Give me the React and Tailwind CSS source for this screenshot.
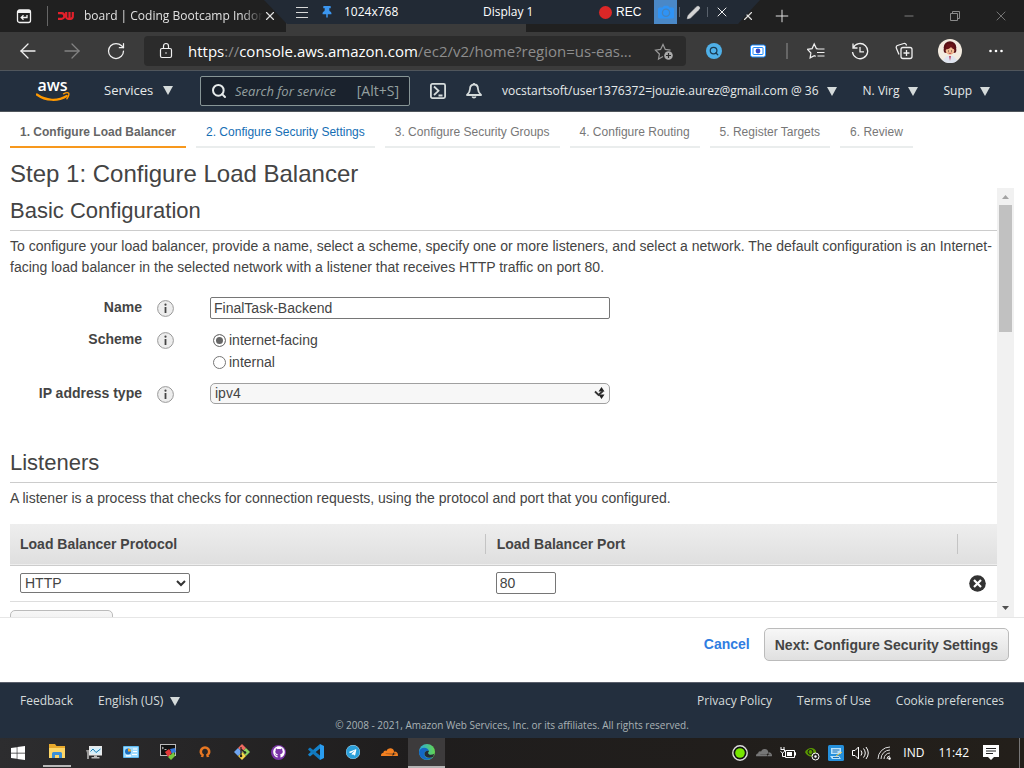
import { Search, X, Plus, Minus, Pencil, RotateCw, ArrowLeft, ArrowRight } from "lucide-react";
import { FaWindows, FaGithub, FaTelegram, FaCloudflare, FaThumbtack } from "react-icons/fa";

const SYSTEM = "font-['Open_Sans','Noto_Sans',sans-serif]";
const WIZARD_STEPS = [
  { label: "1. Configure Load Balancer", style: "border-[#f7981d] font-bold text-[#666]" },
  { label: "2. Configure Security Settings", style: "border-[#eaeded] text-[#146eb4]" },
  { label: "3. Configure Security Groups", style: "border-[#eaeded] text-[#777]" },
  { label: "4. Configure Routing", style: "border-[#eaeded] text-[#777]" },
  { label: "5. Register Targets", style: "border-[#eaeded] text-[#777]" },
  { label: "6. Review", style: "border-[#eaeded] text-[#777]" },
];

function Caret() {
  return (
    <svg viewBox="0 0 10 9" className="h-[9px] w-[10px] shrink-0 fill-[#d5dbdb]" aria-hidden="true">
      <path d="M0 0h10L5 9z" />
    </svg>
  );
}

function IconButton({ label, className = "w-11", children }) {
  return (
    <button type="button" aria-label={label} className={`flex h-full shrink-0 items-center justify-center ${className}`}>
      {children}
    </button>
  );
}

function TabStrip() {
  return (
    <div className="relative flex h-8 shrink-0 items-stretch bg-[#202020] text-[#e0e0e0]">
      <IconButton label="Tab actions" className="w-[47px]">
        <svg viewBox="0 0 16 16" className="size-4" fill="none" stroke="#f2f2f2" strokeWidth="1.3">
          <rect x="1.5" y="2" width="13" height="12.5" rx="2" />
          <path d="M2 3.5h12" strokeWidth="3" />
          <path d="M11 7v2.5H5.5M7.5 7.2 5.2 9.5l2.3 2.3" />
        </svg>
      </IconButton>
      <div className="my-1.5 w-px bg-[#666]" />
      <div className="flex w-[238px] items-center">
        <svg viewBox="0 0 16 8" className="ml-2.5 h-2 w-4 shrink-0" fill="none" stroke="#e3202b" strokeWidth="2.2">
          <path d="M0 1.2h3.5a2.8 2.8 0 0 1 0 5.6H0M8.2 0v4.5a2 2 0 0 0 2 2.3h2.3a2.3 2.3 0 0 0 2.3-2.3V0M11.5 0v6" />
        </svg>
        <span className="ml-2.5 w-[179px] shrink-0 text-xs leading-5 whitespace-nowrap [mask-image:linear-gradient(to_right,black_88%,transparent)]">
          board | Coding Bootcamp Indon
        </span>
        <button type="button" aria-label="Close tab">
          <X className="size-3.5" strokeWidth={2} />
        </button>
      </div>
      <div className="w-60 bg-[#3b3b3b]" />
      <div className="flex w-[230px] items-center justify-end">
        <button type="button" aria-label="Close tab" className="p-px">
          <X className="size-3.5" strokeWidth={2} />
        </button>
      </div>
      <IconButton label="New tab" className="w-[52px]">
        <Plus className="size-5" strokeWidth={1.2} />
      </IconButton>
      <div className="flex-1" />
      <div className="flex shrink-0 text-[#8a8a8a]">
        <IconButton label="Minimise" className="w-[46px]">
          <Minus className="size-3.5" strokeWidth={1.5} />
        </IconButton>
        <IconButton label="Restore" className="w-[46px]">
          <svg viewBox="0 0 12 12" className="size-3" fill="none" stroke="currentColor">
            <path d="M1.5 3.5h7v7h-7zM3.5 3.5v-2h7v7h-2" />
          </svg>
        </IconButton>
        <IconButton label="Close" className="w-[46px]">
          <X className="size-4" strokeWidth={1.2} />
        </IconButton>
      </div>
      <Recorder />
    </div>
  );
}

function Recorder() {
  return (
    <div className="absolute top-0 left-[264px] flex h-6 w-[496px] items-center bg-[#222a35] pl-8 text-xs text-white [clip-path:polygon(0_0,100%_0,474px_100%,23px_100%)]">
      <svg viewBox="0 0 12 12" className="size-3" stroke="#d8d8d8" aria-hidden="true">
        <path d="M0 1.5h12M0 6.5h12M0 11.5h12" />
      </svg>
      <FaThumbtack className="ml-3.5 h-3 w-2.5 text-[#3b96f0]" />
      <span className="ml-3 w-[139px]">1024x768</span>
      <span className="w-[116px]">Display 1</span>
      <span className="mr-1 size-[13px] rounded-full bg-[#dc2727]" />
      <span className="font-['Liberation_Sans',Arial,sans-serif]">REC</span>
      <div className="ml-auto flex h-full items-center pr-[30px]">
        <button type="button" aria-label="Take screenshot" className="flex h-full w-[23px] items-center justify-center bg-[#4a88c7]">
          <svg viewBox="0 0 16 14" className="h-3.5 w-4">
            <path d="M1.500 2.500h3L6 .800h4l1.500 1.700h3a1.500 1.500 0 0 1 1.500 1.500v8a1.500 1.500 0 0 1-1.500 1.500h-13A1.500 1.500 0 0 1 0 12V4a1.500 1.500 0 0 1 1.500-1.500z" fill="#2f93f5" />
            <circle cx="8" cy="7.700" r="3.600" fill="#2f93f5" stroke="#4683bd" strokeWidth="1.300" />
          </svg>
        </button>
        <span className="ml-0.5 h-2.5 w-px bg-[#59616c]" />
        <button type="button" aria-label="Draw" className="px-1.5">
          <Pencil className="size-[15px] fill-[#d5d5d5] text-[#d5d5d5]" strokeWidth={1} />
        </button>
        <span className="h-2.5 w-px bg-[#59616c]" />
        <button type="button" aria-label="Close recorder" className="pl-1.5">
          <X className="size-4" strokeWidth={1.4} />
        </button>
      </div>
    </div>
  );
}

function AddressBar() {
  return (
    <div className="flex h-[38px] shrink-0 items-center bg-[#3b3b3b] px-1.5 text-[#f0f0f0]">
      <IconButton label="Back"><ArrowLeft className="size-6" strokeWidth={1.3} /></IconButton>
      <IconButton label="Forward"><ArrowRight className="size-6 text-[#828282]" strokeWidth={1.3} /></IconButton>
      <IconButton label="Refresh"><RotateCw className="size-5" strokeWidth={1.5} /></IconButton>
      <div className="ml-1.5 flex h-[30px] min-w-0 flex-1 items-center rounded bg-[#2b2b2b] px-3">
        <svg viewBox="0 0 20 20" className="size-5 shrink-0" fill="none" stroke="#f0f0f0" strokeWidth="1.200">
          <rect x="4.500" y="7.500" width="11" height="9" rx="1.500" />
          <path d="M7.500 7.500V5a2.500 2.500 0 0 1 5 0v2.500" />
          <circle cx="10" cy="12" r=".8" fill="#f0f0f0" stroke="none" />
        </svg>
        <span className="ml-3 min-w-0 flex-1 overflow-hidden text-[15px] whitespace-nowrap text-[#8d8d8d]">
          <span className="text-white">https</span>://<span className="text-white">console.aws.amazon.com</span>/ec2/v2/home?region=us-eas...
        </span>
        <button type="button" aria-label="Add to favourites">
          <svg viewBox="0 0 20 20" className="size-5" fill="none" stroke="#999" strokeWidth="1.2">
            <path d="m9 15.500-4.500 2.500.9-5L1.500 9.200l5.100-.8L9 3.500l2.300 4.900 5.200.8" />
            <circle cx="14.500" cy="14.500" r="4.300" fill="#aaa" stroke="none" />
            <path d="M14.500 12v5M12 14.500h5" stroke="#2b2b2b" />
          </svg>
        </button>
      </div>
      <div className="ml-1.5 flex h-full shrink-0 items-center">
        <IconButton label="Page search">
          <span className="flex size-4 items-center justify-center rounded-full bg-[#4fb0e8]">
            <Search className="size-2.5 text-[#1b3b52]" strokeWidth={3} />
          </span>
        </IconButton>
        <IconButton label="Screen capture">
          <svg viewBox="0 0 16 14" className="h-3.5 w-4">
            <rect x=".5" y="1" width="15" height="12" rx="2" fill="#fff" stroke="#1d8bff" />
            <rect x="3" y="3.500" width="10" height="7" rx=".5" fill="#fff" stroke="#1d8bff" />
            <circle cx="8" cy="7" r="2.400" fill="#3949c6" />
          </svg>
        </IconButton>
        <span className="mx-1.5 h-4 w-0.5 bg-[#666]" />
        <IconButton label="Favourites">
          <svg viewBox="0 0 18 18" className="size-[18px]" fill="none" stroke="#f0f0f0" strokeWidth="1.2">
            <path d="m11 6.8-1.6-.2L7.2 2 5.1 6.6l-4.6.7L3.9 11l-.8 4.8 4.1-2.2 1.5.8M11 7h6.5M10 10.5h7.5M10.5 14h7" />
          </svg>
        </IconButton>
        <IconButton label="History">
          <svg viewBox="0 0 18 18" className="size-[18px]" fill="none" stroke="#f0f0f0" strokeWidth="1.3">
            <path d="M2 1.5V6h4.5M2.2 5.8A7.6 7.6 0 1 1 1.5 10M9 5v4.8h4" />
          </svg>
        </IconButton>
        <IconButton label="Collections">
          <svg viewBox="0 0 18 18" className="size-[18px]" fill="none" stroke="#f0f0f0" strokeWidth="1.3">
            <rect x="6" y="5.5" width="11" height="11" rx="2" />
            <path d="M4 12.5 1.4 6.2a2 2 0 0 1 1-2.7l6.4-2a2 2 0 0 1 2.4 1l.4 1M11.5 8v6M8.5 11h6" />
          </svg>
        </IconButton>
        <IconButton label="Profile" className="w-12">
          <svg viewBox="0 0 24 24" className="size-6">
            <circle cx="12" cy="12" r="12" fill="#f3ebe0" />
            <circle cx="12" cy="8.500" r="6.300" fill="#5a1015" />
            <rect x="5.700" y="8" width="12.600" height="6" rx="2.500" fill="#5a1015" />
            <ellipse cx="12" cy="11.500" rx="4.300" ry="4.300" fill="#f2bd93" />
            <path d="M7 10.500c3 0 5.500-1.500 6-2.500 1 1.500 2.500 2.500 4 2.500L15 5H9z" fill="#6b1419" />
            <path d="M10 12h.8M13.200 12h.8" stroke="#33201c" />
            <path d="M10.500 14q1.500 1 3 0" stroke="#b0303a" strokeWidth=".8" fill="none" />
            <path d="M4.500 21.500 9 17h6l4.500 4.500A12 12 0 0 1 4.500 21.500z" fill="#dfe4ef" />
            <path d="m11 17 1 5 1-5z" fill="#c04a6a" />
          </svg>
        </IconButton>
        <IconButton label="More">
          <svg viewBox="0 0 14 4" className="h-1 w-3.5 fill-white">
            <circle cx="1.500" cy="2" r="1.300" /><circle cx="7" cy="2" r="1.300" /><circle cx="12.500" cy="2" r="1.300" />
          </svg>
        </IconButton>
      </div>
    </div>
  );
}

function ConsoleNav() {
  return (
    <nav className="flex h-[42px] shrink-0 items-center border-y border-[#50565c] bg-[#232f3e] text-xs font-medium whitespace-nowrap text-[#e6eaea]">
      <a href="#home" aria-label="AWS" className="ml-9 w-[34px]">
        <svg viewBox="0 0 34 34" className="size-[34px]">
          <text x="16.500" y="16.500" textAnchor="middle" fontFamily="Open Sans, sans-serif" fontSize="16" fontWeight="600" fill="#fff">aws</text>
          <path d="M.8 20.500c9 6.500 21 7 30 1.500" fill="none" stroke="#f90" strokeWidth="2.200" strokeLinecap="round" />
          <path d="M27.500 19.800c2-1 4.500-1.300 5.200-.6.600.8-.2 3.800-1.800 5.500" fill="none" stroke="#f90" strokeWidth="1.400" strokeLinecap="round" />
        </svg>
      </a>
      <button type="button" className="ml-[34px] flex w-[69px] items-center justify-between text-[13px]">Services <Caret /></button>
      <label className="ml-[27px] flex h-[30px] w-[210px] items-center rounded-xs border border-[#879596] bg-[#1a222d] px-2.5 text-sm font-normal text-[#95a0a0]">
        <Search className="size-4 shrink-0 text-[#e6eaea]" strokeWidth={3} />
        <input
          aria-label="Search for services"
          placeholder="Search for service"
          className="ml-2 w-[112px] min-w-0 text-[13px] italic outline-none placeholder:text-[#95a0a0]"
        />
        <span className="ml-auto">[Alt+S]</span>
      </label>
      <button type="button" aria-label="CloudShell" className="ml-5">
        <svg viewBox="0 0 16 16" className="size-4" fill="none" stroke="#d5dbdb" strokeWidth="1.800">
          <rect x=".9" y=".9" width="14.200" height="14.200" rx="1.500" />
          <path d="m4 3.500 4.500 4.300L4 12M8.500 12.500h4" />
        </svg>
      </button>
      <button type="button" aria-label="Notifications" className="ml-5">
        <svg viewBox="0 0 16 18" className="h-[18px] w-4" fill="none" stroke="#d5dbdb" strokeWidth="1.800" strokeLinejoin="round">
          <path d="M8 1v1.500M8 2.500c3 0 4 2 4 4.500 0 3 1 4 3 6H1c2-2 3-3 3-6 0-2.500 1-4.500 4-4.500z" />
          <path d="M6.300 14.500a1.800 1.800 0 0 0 3.400 0" />
        </svg>
      </button>
      <button type="button" className="ml-5 flex items-center gap-2">
        vocstartsoft/user1376372=jouzie.aurez@gmail.com @ 36 <Caret />
      </button>
      <button type="button" className="ml-[26px] flex items-center gap-2">N. Virg <Caret /></button>
      <button type="button" className="ml-[26px] flex items-center gap-2">Supp <Caret /></button>
    </nav>
  );
}

function InfoIcon({ label }) {
  return (
    <button type="button" aria-label={`About ${label}`} className="mt-[3px] ml-[15px] size-[17px]">
      <svg viewBox="0 0 17 17" className="size-[17px]">
        <circle cx="8.500" cy="8.500" r="7.900" fill="#ededed" stroke="#999" />
        <path d="M8.500 7v6" stroke="#444" strokeWidth="1.800" />
        <circle cx="8.500" cy="4.700" r="1.100" fill="#444" />
      </svg>
    </button>
  );
}

function SectionTitle({ children }) {
  return <h2 className="border-b border-[#ccc] pb-1 text-[22px] leading-[30px]">{children}</h2>;
}

const RADIO = "size-[13px] shrink-0 appearance-none rounded-full border border-[#767676] bg-white checked:bg-[#666] checked:shadow-[inset_0_0_0_2px_white]";

function ConfigForm() {
  return (
    <form className="mt-[19px] grid grid-cols-[132px_68px_minmax(0,400px)] gap-y-2.5 leading-[22px]">
      <label htmlFor="name" className="text-right leading-5 font-bold">Name</label>
      <InfoIcon label="Name" />
      <input id="name" defaultValue="FinalTask-Backend" className="h-[22px] w-full rounded-xs border border-[#767676] px-[3px]" />

      <span id="scheme" className="text-right leading-5 font-bold">Scheme</span>
      <InfoIcon label="Scheme" />
      <div role="radiogroup" aria-labelledby="scheme">
        <label className="flex items-center gap-[3px] pl-[3px]">
          <input type="radio" name="scheme" defaultChecked className={RADIO} />internet-facing
        </label>
        <label className="flex items-center gap-[3px] pl-[3px]">
          <input type="radio" name="scheme" className={RADIO} />internal
        </label>
      </div>

      <label htmlFor="ip" className="text-right leading-5 font-bold">IP address type</label>
      <InfoIcon label="IP address type" />
      <div className="relative">
        <select id="ip" className="block h-[21px] w-full appearance-none rounded-[5px] border border-[#a0a0a0] bg-[#f7f7f7] px-1 leading-[19px]">
          <option>ipv4</option>
        </select>
        <svg viewBox="0 0 12 14" className="pointer-events-none absolute top-[3px] right-1 h-3.5 w-3" aria-hidden="true">
          <path d="M4.500 5.500 7.500 1l3 4.500zM4.500 8.500h6L7.500 13z" fill="#222" />
          <path d="m1 5.500 3.500 3.500L9 5" fill="none" stroke="#333" strokeWidth="1.800" />
        </svg>
      </div>
    </form>
  );
}

function ListenerTable() {
  return (
    <table className="mt-[15px] w-full table-fixed border-collapse text-left">
      <thead>
        <tr className="h-[41px] border-b border-[#ccc] bg-linear-to-b from-[#eee] to-[#dfdfdf]">
          <th className="w-[48.2%] pl-2.5"><div className="border-r border-[#c4c4c4] leading-5">Load Balancer Protocol</div></th>
          <th className="pl-[11px]"><div className="border-r border-[#c4c4c4] leading-5">Load Balancer Port</div></th>
          <th className="w-[39px]" aria-label="Remove" />
        </tr>
      </thead>
      <tbody>
        <tr className="h-9 border-b border-[#ddd]">
          <td className="pl-2.5">
            <div className="relative w-[170px]">
              <select aria-label="Load Balancer Protocol" className="block h-5 w-full appearance-none rounded-xs border border-[#767676] bg-white px-1 leading-[18px]">
                <option>HTTP</option>
              </select>
              <svg viewBox="0 0 10 7" className="pointer-events-none absolute top-[7px] right-1 h-[7px] w-2.5" aria-hidden="true">
                <path d="m1 1 4 4 4-4" fill="none" stroke="#333" strokeWidth="2" />
              </svg>
            </div>
          </td>
          <td className="pl-2.5">
            <input aria-label="Load Balancer Port" defaultValue="80" className="block h-[22px] w-[60px] rounded-xs border border-[#767676] px-[3px]" />
          </td>
          <td className="pr-[11px]">
            <button type="button" aria-label="Remove listener" className="ml-auto block size-[17px]">
              <svg viewBox="0 0 17 17" className="size-[17px]">
                <circle cx="8.500" cy="8.500" r="8.300" fill="#333" />
                <path d="m5 5 7 7m0-7-7 7" stroke="#fff" strokeWidth="2.200" />
              </svg>
            </button>
          </td>
        </tr>
      </tbody>
    </table>
  );
}

function ScrollBar() {
  return (
    <div className="flex w-[17px] shrink-0 flex-col bg-[#f1f1f1]" aria-hidden="true">
      <svg viewBox="0 0 17 17" className="size-[17px]" fill="#a3a3a3"><path d="M5 11h7L8.500 7z" /></svg>
      <div className="mx-0.5 h-[127px] bg-[#c1c1c1]" />
      <div className="flex-1" />
      <svg viewBox="0 0 17 17" className="size-[17px]" fill="#505050"><path d="M5 6h7l-3.500 4z" /></svg>
    </div>
  );
}

function TaskCell({ label, className = "", children }) {
  return (
    <button type="button" aria-label={label} className={`flex h-full w-[37px] items-center justify-center border-b-2 ${className || "border-transparent"}`}>
      {children}
    </button>
  );
}

function TaskBar() {
  return (
    <div className="flex h-[30px] shrink-0 items-center bg-linear-to-r from-[#2d2d2f] via-[#1f1d1d] via-40% to-[#231f1a] text-xs text-white">
      <button type="button" aria-label="Start" className="flex h-full w-[38px] items-center pl-2.5"><FaWindows className="size-4" /></button>
      <TaskCell label="File Explorer">
        <span className="flex h-[30px] items-center border-b-2 border-[#b9b9b9] px-1.5">
          <svg viewBox="0 0 16 16" className="size-4">
            <path d="M0 1h6l1.500 2H16v12H0z" fill="#e8a92c" /><path d="M0 5h16v10H0z" fill="#fcd667" />
            <path d="M3 15v-4.500A1.500 1.500 0 0 1 4.500 9h7a1.500 1.500 0 0 1 1.500 1.500V15h-3v-3H6v3z" fill="#3a8fd6" />
          </svg>
        </span>
      </TaskCell>
      <TaskCell label="Resource Monitor">
        <svg viewBox="0 0 16 16" className="size-4">
          <path d="M0 6h3v9H1V9z" fill="#999" /><rect x="3" y="2" width="13" height="9.500" fill="#e8e8e8" />
          <rect x="4.500" y="3.500" width="10" height="6.500" fill="#d6effb" />
          <path d="M4.500 7.500 7 5l3 3.500L14.500 5" fill="none" stroke="#1b7fb5" /><path d="M8 11.500h3V13h2.500v1.500h-8V13H8z" fill="#bbb" />
        </svg>
      </TaskCell>
      <TaskCell label="Control Panel">
        <svg viewBox="0 0 16 12" className="h-3 w-4">
          <rect width="16" height="12" rx="1" fill="#5cb8f0" /><rect x="1" y="1" width="14" height="10" fill="#9fdcff" />
          <circle cx="5" cy="5.500" r="3" fill="#1c6fc0" /><path d="M5 5.500V2.500a3 3 0 0 1 3 3z" fill="#f5a623" />
          <path d="M10 3h4M10 5.500h4M9 8.500h5M3 9.800h5" stroke="#fff" strokeWidth="1.200" />
        </svg>
      </TaskCell>
      <TaskCell label="Remote Terminal">
        <svg viewBox="0 0 16 16" className="size-4">
          <rect x=".5" y=".5" width="15" height="11" fill="#111" stroke="#bbb" /><path d="m2 3 1.500 1L2 5M4.500 5.500h2" stroke="#ddd" strokeWidth=".8" fill="none" />
          <path d="m5 8 4-3 3 4-4 4z" fill="#e23a3a" /><path d="m10 5 5-1 1 4-4 2z" fill="#3478e0" /><path d="m8 13 6-5 1 4-4 4z" fill="#78c83c" />
        </svg>
      </TaskCell>
      <TaskCell label="OpenVPN">
        <svg viewBox="0 0 14 14" className="size-3.5"><path d="M4 12 4.500 10a4.200 4.200 0 1 1 5 0l.5 2" fill="none" stroke="#e87722" strokeWidth="2.600" /></svg>
      </TaskCell>
      <TaskCell label="Git Bash">
        <svg viewBox="0 0 16 16" className="size-4">
          <path d="m8 0 4 4-4 4-4-4z" fill="#f06a5f" /><path d="m12 4 4 4-4 4-4-4z" fill="#8fd460" /><path d="m8 8 4 4-4 4-4-4z" fill="#f7d64a" /><path d="m4 4 4 4-4 4-4-4z" fill="#6fa5f0" />
          <path d="M7 3v9M7 5l4 3.500" stroke="#222" strokeWidth="1.200" /><circle cx="7" cy="12" r="1.300" fill="#222" /><circle cx="11" cy="8.500" r="1.300" fill="#222" />
        </svg>
      </TaskCell>
      <TaskCell label="GitHub Desktop">
        <span className="flex size-[15px] items-center justify-center rounded-full bg-[#7b35a8]"><FaGithub className="size-3" /></span>
      </TaskCell>
      <TaskCell label="Visual Studio Code">
        <svg viewBox="0 0 16 16" className="size-4">
          <path d="m12 0 4 2v12l-4 2z" fill="#2a9df0" /><path d="M12 0v4.500L2 12.500.2 11v-.8z" fill="#1583cc" /><path d="M12 16v-4.500L2 3.500.2 5v.8z" fill="#1179bf" />
        </svg>
      </TaskCell>
      <TaskCell label="Telegram">
        <span className="flex size-3.5 items-center justify-center rounded-full bg-white"><FaTelegram className="size-3.5 text-[#2b9fd9]" /></span>
      </TaskCell>
      <TaskCell label="Cloudflare"><FaCloudflare className="size-[17px] text-[#f38020]" /></TaskCell>
      <TaskCell label="Edge" className="border-[#b5b5b5] bg-[#3d3b3c]">
        <svg viewBox="0 0 16 16" className="size-4">
          <defs>
            <linearGradient id="edge-top"><stop stopColor="#2aa9e0" /><stop offset="1" stopColor="#63d64e" /></linearGradient>
          </defs>
          <circle cx="8" cy="8" r="8" fill="url(#edge-top)" />
          <path d="M0 8c1-5 8-6 10-1-3-1-5 1-4.500 4 .5 3 4 4 8.500 2A8 8 0 0 1 0 8z" fill="#1467c4" />
          <path d="M10 7c-.3 1-1.200 1.500-.8 2.500 1 1.800 4 1.500 6 .3l-1 3c-4 2-8.500.5-8.700-2.500C5.300 8 7.500 6.300 10 7z" fill="#262a35" />
        </svg>
      </TaskCell>
      <div className="ml-auto flex h-full shrink-0 items-center">
        <div className="flex items-center gap-2">
          <svg viewBox="0 0 16 16" className="size-4"><circle cx="8" cy="8" r="7.200" fill="#111" stroke="#ddd" strokeWidth="1.400" /><circle cx="8" cy="8" r="4.800" fill="#76e600" /></svg>
          <FaCloudflare className="size-4 text-[#777]" />
          <svg viewBox="0 0 16 14" className="h-3.5 w-4" fill="none" stroke="#fff"><path d="M5.500 4.500h9v7h-9zM14.500 6.500h1v3M1 1v2M4 1v2M.500 3.500h4v2l-2 1.500-2-1.500M2.500 7v3.500h3" /><path d="M7 6h5v4H7z" fill="#fff" stroke="none" /></svg>
          <svg viewBox="0 0 16 16" className="size-4"><path d="M1 7c3-5 9-5 11-1v3c-3 4-9 3-11-2z" fill="#5b9a00" /><circle cx="6.500" cy="7" r="2.500" fill="none" stroke="#181818" /><circle cx="11.500" cy="11.500" r="3.500" fill="#222" stroke="#fff" /><circle cx="11.500" cy="11.500" r="1.200" fill="#fff" /></svg>
          <svg viewBox="0 0 16 16" className="size-4"><rect width="16" height="16" rx="1.500" fill="#2590dc" /><path d="M3 3h10v6H3zM2 11h9l2 3H4z" fill="#b9e2fb" /><path d="M4.500 5h7M4.500 7h5M5 12.500h6" stroke="#1b6fb4" /><path d="m8 11 6-4" stroke="#f4c542" /></svg>
          <svg viewBox="0 0 17 14" className="h-3.5 w-[17px]" fill="none" stroke="#fff"><path d="M.500 4.500H3L6.500 1v12L3 9.500H.500zM9 4.500q2 2.500 0 5M11.500 2.500q3.500 4.500 0 9M14 1q4.500 6 0 12" /></svg>
          <svg viewBox="0 0 14 14" className="size-3.5" fill="none" stroke="#ddd"><path d="M1 13A12 12 0 0 1 13 1M4 13a9 9 0 0 1 9-9M7 13a6 6 0 0 1 6-6M10 13a3 3 0 0 1 3-3" /><circle cx="12.500" cy="12.500" r="1" fill="#fff" /></svg>
        </div>
        <span className="ml-3">IND</span>
        <span className="ml-3.5">11:42</span>
        <svg viewBox="0 0 16 16" className="mr-5 ml-3.5 size-4"><path d="M0 0h16v12h-5l-3 3-3-3H0z" fill="#fff" /><path d="M3 3.500h10M3 6h10M3 8.500h7" stroke="#222" /></svg>
        <span className="mr-1 h-full w-px bg-[#777]" />
      </div>
    </div>
  );
}

export default function App() {
  return (
    <div className={`flex h-screen flex-col overflow-hidden bg-white ${SYSTEM}`}>
      <TabStrip />
      <AddressBar />
      <ConsoleNav />
      <div className="flex min-h-0 flex-1 flex-col font-['Liberation_Sans',Arial,sans-serif] text-sm text-[#444]">
        <nav className="flex shrink-0 gap-2.5 px-2.5 text-xs whitespace-nowrap">
          {WIZARD_STEPS.map((step) => (
            <a key={step.label} href="#step" className={`border-b-2 px-2.5 pt-2.5 pb-1 leading-5 ${step.style}`}>{step.label}</a>
          ))}
        </nav>
        <h1 className="shrink-0 px-2.5 pt-3 text-2xl leading-7">Step 1: Configure Load Balancer</h1>
        <div className="flex min-h-0 flex-1 pr-2.5">
          <main className="min-w-0 flex-1 overflow-hidden pt-2 pl-2.5">
            <SectionTitle>Basic Configuration</SectionTitle>
            <p className="mt-[5px] leading-[21px]">
              To configure your load balancer, provide a name, select a scheme, specify one or more listeners, and select a network. The default configuration is an Internet-facing load balancer in the selected network with a listener that receives HTTP traffic on port 80.
            </p>
            <ConfigForm />
            <div className="mt-11"><SectionTitle>Listeners</SectionTitle></div>
            <p className="mt-[5px] leading-[21px]">
              A listener is a process that checks for connection requests, using the protocol and port that you configured.
            </p>
            <ListenerTable />
            <button type="button" aria-label="Add listener" className="mt-2 block h-8 w-[103px] rounded-[5px] border border-[#bbb] bg-linear-to-b from-[#f7f7f7] to-[#e4e4e4]" />
          </main>
          <ScrollBar />
        </div>
        <div className="flex h-[65px] shrink-0 items-start justify-end gap-3.5 border-t border-[#e6e6e6] px-[15px] pt-2.5 font-bold">
          <a href="#cancel" className="leading-[33px] text-[#2f7de1]">Cancel</a>
          <button type="button" className="h-[33px] rounded-[5px] border border-[#bbb] bg-linear-to-b from-[#f7f7f7] to-[#e0e0e0] px-2.5">Next: Configure Security Settings</button>
        </div>
      </div>
      <footer className="flex h-14 shrink-0 flex-col border-t border-[#5a5f6b] bg-[#232f3e] px-5 pt-2 text-xs font-medium text-[#d5dbdb]">
        <div className="flex items-center gap-[25px] leading-5">
          <a href="#feedback">Feedback</a>
          <button type="button" className="flex items-center gap-[7px]">English (US) <Caret /></button>
          <a href="#privacy" className="ml-auto">Privacy Policy</a>
          <a href="#terms">Terms of Use</a>
          <a href="#cookies">Cookie preferences</a>
        </div>
        <p className="mt-1.5 text-center text-[10px] leading-4 text-[#aab3b5]">© 2008 - 2021, Amazon Web Services, Inc. or its affiliates. All rights reserved.</p>
      </footer>
      <TaskBar />
    </div>
  );
}
